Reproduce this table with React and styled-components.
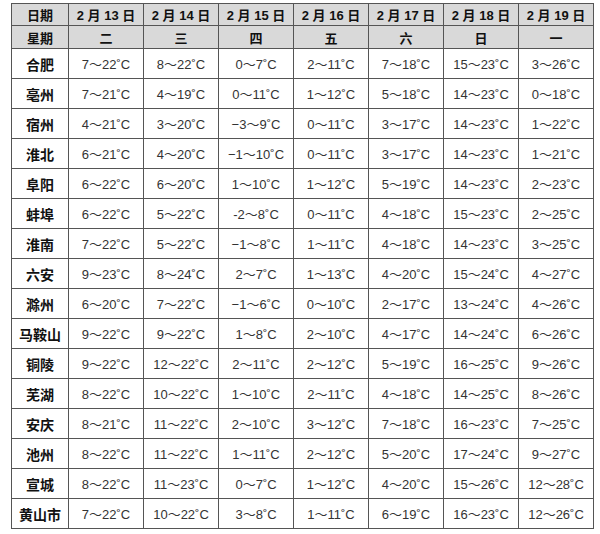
import styled, { createGlobalStyle } from "styled-components";

const GlobalStyle = createGlobalStyle`
  html, body {
    margin: 0;
    padding: 0;
    background: #ffffff;
  }
`;

const Page = styled.div`
  padding: 3px 0 0 11px;
  font-family: "Liberation Sans", "Noto Sans CJK SC", sans-serif;
`;

const Table = styled.table`
  border-collapse: collapse;
  table-layout: fixed;
  width: 583px;
  border: 1px solid #444;
`;

const HeadRow = styled.tr`
  height: ${(p) => p.$h}px;
  background: #d9d9d9;
`;

const Row = styled.tr`
  height: 30px;
`;

const HeadCell = styled.th`
  border: 1px solid #555;
  padding: 0;
  font-size: 13px;
  font-weight: bold;
  color: #111;
  text-align: center;
  white-space: nowrap;
  width: ${(p) => (p.$first ? "56px" : "auto")};
`;

const City = styled.th`
  border: 1px solid #555;
  padding: 0;
  font-size: 14px;
  font-weight: bold;
  color: #111;
  text-align: center;
  font-family: "Noto Sans CJK SC", sans-serif;
`;

const Cell = styled.td`
  border: 1px solid #555;
  padding: 0;
  font-size: 13px;
  color: #333;
  text-align: center;
  white-space: nowrap;
`;

const Tilde = styled.span`
  font-family: "Noto Sans CJK SC", sans-serif;
  font-size: 13px;
`;

const dates = ["13", "14", "15", "16", "17", "18", "19"];
const weekdays = ["二", "三", "四", "五", "六", "日", "一"];

const rows = [
  ["合肥", "7~22", "8~22", "0~7", "2~11", "7~18", "15~23", "3~26"],
  ["亳州", "7~21", "4~19", "0~11", "1~12", "5~18", "14~23", "0~18"],
  ["宿州", "4~21", "3~20", "−3~9", "0~11", "3~17", "14~23", "1~22"],
  ["淮北", "6~21", "4~20", "−1~10", "0~11", "3~17", "14~23", "1~21"],
  ["阜阳", "6~22", "6~20", "1~10", "1~12", "5~19", "14~23", "2~23"],
  ["蚌埠", "6~22", "5~22", "-2~8", "0~11", "4~18", "15~23", "2~25"],
  ["淮南", "7~22", "5~22", "−1~8", "1~11", "4~18", "14~23", "3~25"],
  ["六安", "9~23", "8~24", "2~7", "1~13", "4~20", "15~24", "4~27"],
  ["滁州", "6~20", "7~22", "−1~6", "0~10", "2~17", "13~24", "4~26"],
  ["马鞍山", "9~22", "9~22", "1~8", "2~10", "4~17", "14~24", "6~26"],
  ["铜陵", "9~22", "12~22", "2~11", "2~12", "5~19", "16~25", "9~26"],
  ["芜湖", "8~22", "10~22", "1~10", "2~11", "4~18", "14~25", "8~26"],
  ["安庆", "8~21", "11~22", "2~10", "3~12", "7~18", "16~23", "7~25"],
  ["池州", "8~22", "11~22", "1~11", "2~12", "5~20", "17~24", "9~27"],
  ["宣城", "8~22", "11~23", "0~7", "1~12", "4~20", "15~26", "12~28"],
  ["黄山市", "7~22", "10~22", "3~8", "1~11", "6~19", "16~23", "12~26"],
];

const Temp = ({ value }) => {
  const [lo, hi] = value.split("~");
  return (
    <>
      {lo}
      <Tilde>～</Tilde>
      {hi}˚C
    </>
  );
};

export default function App() {
  return (
    <Page>
      <GlobalStyle />
      <Table>
        <thead>
          <HeadRow $h={22}>
            <HeadCell $first>日期</HeadCell>
            {dates.map((d) => (
              <HeadCell key={d}>2 月 {d} 日</HeadCell>
            ))}
          </HeadRow>
          <HeadRow $h={23}>
            <HeadCell $first>星期</HeadCell>
            {weekdays.map((w) => (
              <HeadCell key={w}>{w}</HeadCell>
            ))}
          </HeadRow>
        </thead>
        <tbody>
          {rows.map(([city, ...temps]) => (
            <Row key={city}>
              <City>{city}</City>
              {temps.map((t, i) => (
                <Cell key={i}>
                  <Temp value={t} />
                </Cell>
              ))}
            </Row>
          ))}
        </tbody>
      </Table>
    </Page>
  );
}
